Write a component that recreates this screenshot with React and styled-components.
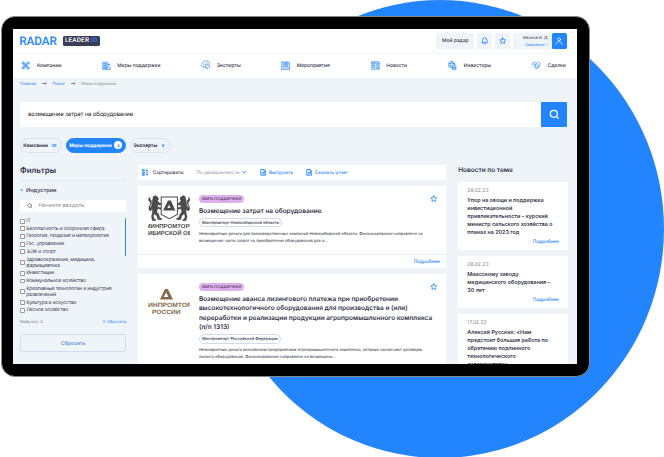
import React from "react";
import styled, { createGlobalStyle, css } from "styled-components";

const blue = "#2385fe";
const ink = "#34354a";
const pale = "#eff4f9";

const Global = createGlobalStyle`
  * { box-sizing: border-box; }
  html, body { margin: 0; padding: 0; background: #fff; overflow: hidden; }
  body { font-family: Inter, "Liberation Sans", sans-serif; font-size: 5px; color: ${ink}; text-rendering: geometricPrecision; }
  svg { display: block; flex: none; }
`;

const Page = styled.div`
  position: relative;
  width: 664px;
  height: 457px;
  padding: 16px 0 0 1px;
  overflow: hidden;
`;
const Disc = styled.div`
  position: absolute;
  left: 216px;
  top: -0.5px;
  width: 448px;
  height: 458px;
  border-radius: 50%;
  background: ${blue};
`;
const Device = styled.div`
  position: relative;
  width: 588.5px;
  height: 361px;
  padding: 11.7px 11px 12px 10.7px;
  background: #000;
  border: 1px solid #85878a;
  border-radius: 14px;
`;
const Screen = styled.div`
  width: 564.3px;
  height: 335.3px;
  overflow: hidden;
  background: ${pale};
`;
const Text = styled.span`
  display: block;
  margin: ${(p) => p.$drop ?? 0.5}px 0 ${(p) => -(p.$drop ?? 0.5)}px;
  white-space: nowrap;
  font-size: ${(p) => p.$size || 5}px;
  font-weight: ${(p) => p.$weight || 400};
  color: ${(p) => p.$color || "inherit"};
  letter-spacing: ${(p) => p.$track || 0}px;
`;

const Header = styled.header`
  display: flex;
  align-items: center;
  height: 24.3px;
  padding: 0 10px 0 6.5px;
  background: #fff;
`;
const Brand = styled.div`
  width: 43.5px;
  font: 500 11.8px/14px Roboto, sans-serif;
  letter-spacing: -0.1px;
  color: ${blue};
`;
const BrandTag = styled.div`
  display: flex;
  align-items: center;
  justify-content: center;
  gap: 2px;
  width: 37px;
  height: 9.5px;
  border-radius: 1.6px;
  background: #3b3c55;
  color: #fff;
  font: 500 6.5px/9px Roboto, sans-serif;
  letter-spacing: 0.1px;
  b { color: ${blue}; font-weight: 500; }
`;
const HeaderTools = styled.div`
  display: flex;
  gap: 3px;
  margin-left: auto;
`;
const Tool = styled.div`
  display: flex;
  align-items: center;
  justify-content: center;
  width: ${(p) => p.$w}px;
  height: 15.5px;
  border-radius: 1.5px;
  background: ${pale};
`;
const User = styled.div`
  display: flex;
  height: 15.5px;
  border-radius: 1.5px;
  overflow: hidden;
  background: ${pale};
`;
const UserName = styled.div`
  display: flex;
  flex-direction: column;
  align-items: flex-end;
  justify-content: center;
  gap: 1px;
  width: 38.5px;
  padding-right: 3.3px;
  line-height: 6px;
`;
const UserRole = styled.div`
  display: flex;
  align-items: center;
  gap: 1.5px;
`;
const Avatar = styled.div`
  display: grid;
  place-items: center;
  width: 15.2px;
  background: ${blue};
  border-radius: 1.5px;
`;

const Nav = styled.nav`
  display: grid;
  grid-template-columns: 80.2px 99px 80.3px 90px 77.5px 83.7px 1fr;
  align-items: center;
  height: 25px;
  padding: 0 0 1.4px 8.8px;
  background: #fff;
  border-top: 0.5px solid #f6f9fc;
`;
const NavItem = styled.div`
  display: flex;
  align-items: center;
  gap: 6.4px;
  line-height: 8px;
`;

const Crumbs = styled.div`
  display: flex;
  align-items: center;
  height: 10.7px;
  margin-left: 7.3px;
  gap: 6px;
`;
const Search = styled.div`
  display: flex;
  justify-content: space-between;
  align-items: center;
  width: 547px;
  height: 24.7px;
  margin: 13.3px 0 0 7.3px;
  padding-left: 8px;
  background: #fff;
`;
const SearchButton = styled.div`
  display: grid;
  place-items: center;
  width: 26px;
  height: 24.7px;
  border-radius: 0 1px 1px 0;
  background: ${blue};
`;
const Tabs = styled.div`
  display: flex;
  gap: 4px;
  margin: 11.6px 0 0 7.3px;
`;
const Tab = styled.div`
  display: flex;
  align-items: center;
  justify-content: space-between;
  width: ${(p) => p.$w}px;
  height: 14.3px;
  padding: 0 ${(p) => (p.$active ? "2.6px" : "3.2px")} 0 2.2px;
  border-radius: 8px;
  border: 0.7px solid #d7e5f5;
  ${(p) => p.$active && css`
    background: ${blue};
    border-color: ${blue};
    color: #fff;
  `}
`;
const Count = styled.span`
  display: grid;
  place-items: center;
  min-width: 8px;
  height: 8px;
  border-radius: 4px;
  font-size: 4.1px;
  font-weight: 600;
  color: ${blue};
  background: ${(p) => (p.$active ? "#fff" : "transparent")};
`;

const Body = styled.div`
  display: grid;
  grid-template-columns: 106.3px 308.3px 109.7px;
  column-gap: 11.8px;
  margin-left: 7.3px;
  height: 211px;
`;

const Filters = styled.aside`
  padding-top: 11.5px;
`;
const FilterTitle = styled.div`
  height: 16.8px;
  line-height: 12px;
  border-bottom: 0.7px solid #dfe8f2;
`;
const Group = styled.div`
  display: flex;
  align-items: center;
  gap: 2px;
  height: 19px;
`;
const FilterInput = styled.div`
  display: flex;
  align-items: center;
  gap: 5.4px;
  height: 12.3px;
  padding-left: 7.5px;
  background: #fff;
`;
const Options = styled.div`
  display: grid;
  grid-template-columns: 1fr 1.2px;
  margin-top: 5.2px;
`;
const Scroll = styled.div`
  height: 38px;
  margin-top: 0.5px;
  background: ${blue};
  border-radius: 1px;
`;
const Option = styled.div`
  display: flex;
  align-items: center;
  gap: 1.3px;
  height: ${(p) => (p.$tall ? 14 : 7.65)}px;
  font-size: 4.9px;
  line-height: 6px;
  letter-spacing: -0.1px;
  white-space: pre;
`;
const Box = styled.i`
  flex: none;
  width: 4.9px;
  height: 4.9px;
  background: #fff;
  border: 0.7px solid #999ca3;
  border-radius: 0.8px;
`;
const FilterFoot = styled.div`
  display: flex;
  align-items: center;
  justify-content: space-between;
  height: 8px;
  margin-top: 3.4px;
`;
const Reset = styled.div`
  display: grid;
  place-items: center;
  height: 18.2px;
  margin-top: 8.6px;
  border: 1px solid #cfdff3;
  border-radius: 1.5px;
`;

const Main = styled.main`
  padding-top: 12px;
`;
const SortBar = styled.div`
  display: flex;
  align-items: center;
  height: 15.2px;
  padding-left: 4px;
  background: #fff;
`;
const SortLabel = styled.div`
  width: 43.7px;
  margin-left: 3.7px;
`;
const SortValue = styled.div`
  display: flex;
  align-items: center;
  justify-content: space-between;
  width: 50px;
`;
const Action = styled.div`
  display: flex;
  align-items: center;
  gap: 2.4px;
  margin-left: ${(p) => p.$gap}px;
`;
const Card = styled.article`
  display: grid;
  grid-template-columns: 42.5px minmax(0, 1fr);
  column-gap: 8.5px;
  height: ${(p) => p.$h}px;
  margin-top: 6.4px;
  padding: 8.8px 7px 0 9.8px;
  background: #fff;
`;
const CardBody = styled.div`
  display: flex;
  flex-direction: column;
  align-items: flex-start;
`;
const CardTop = styled.div`
  display: flex;
  justify-content: space-between;
  width: 100%;
  padding-right: 2.2px;
`;
const Badge = styled.span`
  display: grid;
  place-items: center;
  width: 45.6px;
  height: 8px;
  border-radius: 4px;
  background: #dfb1ec;
`;
const CardTitle = styled.h3`
  margin: 4.1px 0 1.5px;
  font-size: 6.5px;
  line-height: 9.4px;
  font-weight: 600;
  white-space: pre;
`;
const Chip = styled.div`
  display: grid;
  place-items: center;
  width: ${(p) => p.$w}px;
  height: 9.4px;
  border: 0.7px solid #cddcec;
  border-radius: 5px;
`;
const Desc = styled.div`
  display: flex;
  flex-direction: column;
  margin-top: 3.2px;
  line-height: 6.5px;
`;
const CardFoot = styled.div`
  display: flex;
  grid-column: 1 / -1;
  align-items: center;
  justify-content: flex-end;
  align-self: end;
  height: 14px;
  margin: 0 -7px 0 -9.8px;
  padding-right: 6.5px;
  border-top: 0.7px solid #edf2f7;
`;

const News = styled.aside`
  padding-top: 11.6px;
`;
const NewsTitle = styled.div`
  height: 17.4px;
  line-height: 10px;
`;
const NewsCard = styled.article`
  display: flex;
  flex-direction: column;
  height: ${(p) => p.$h}px;
  margin-bottom: 6.4px;
  padding: 4.4px 9px 0 9.2px;
  background: #fff;
  line-height: 8px;
`;
const NewsDate = styled.div`
  display: flex;
  height: 9.8px;
`;
const NewsLink = styled.div`
  display: flex;
  justify-content: flex-end;
  margin-top: 1px;
`;

const Icon = ({ s = 8, h, vb = "0 0 24 24", sw = 2, color = blue, children }) => (
  <svg width={s} height={h || s} viewBox={vb} fill="none" stroke={color} strokeWidth={sw} strokeLinecap="round" strokeLinejoin="round">
    {children}
  </svg>
);
const Star = () => (
  <Icon s={7.5} sw={2.6}><path d="M12 2.5l2.9 6 6.6.9-4.8 4.6 1.2 6.6-5.9-3.1-5.9 3.1 1.2-6.6-4.8-4.6 6.6-.9z" /></Icon>
);
const Chevron = ({ s = 4.5, sw = 5 }) => (
  <Icon s={s} sw={sw}><path d="M3 8l9 8 9-8" /></Icon>
);
const Arrow = () => (
  <Icon s={4.6} h={3} vb="0 0 46 30" sw={6} color="#4a4b5c"><path d="M3 15h38M31 6l10 9-10 9" /></Icon>
);
const Doc = () => (
  <Icon s={6.8} sw={3}>
    <path d="M4 2h11l5 5v15H4zM14 2v6h6" /><path d="M8 13h8M8 17h8" />
  </Icon>
);
const Lens = ({ s, color, sw }) => (
  <Icon s={s} color={color} sw={sw}><circle cx="11" cy="11" r="8" /><path d="M17 17l4.5 4.5" /></Icon>
);

const navArt = {
  company: (
    <><circle cx="5" cy="5" r="3" /><circle cx="19" cy="5" r="3" /><circle cx="5" cy="19" r="3" /><circle cx="19" cy="19" r="3" />
      <path d="M7 7l10 10M17 7L7 17M8 5c3 3 5 3 8 0M8 19c3-3 5-3 8 0M5 8c3 3 3 5 0 8M19 8c-3 3-3 5 0 8" /><circle cx="12" cy="12" r="3" /></>
  ),
  support: (
    <><path d="M2 22V3h11v19zM5 7h5M5 11h5M5 15h5M5 19h5M13 9h6v5" fill="#b9d9ff" /><path d="M12 16h4l2 2h5v4H12zM16 5l3 4" /></>
  ),
  expert: (
    <><path d="M6 17c-4 0-6-3-5-6 0-2 2-3 3-3 0-4 4-6 7-5 4-2 8 0 9 4 3 1 4 4 2 7" /><path d="M6 17h5M7 11c2-2 4-1 5 1M15 7c-1 2 0 4 2 4M12 14l4-3 6 4-3 4-3 3-4-4zM12 18l3 3" /></>
  ),
  event: (
    <><path d="M2 3h20v19H2zM2 18h20" /><path d="M6 3h12v11H6z" fill="#b9d9ff" /><path d="M9 7h6M9 10h6" /></>
  ),
  news: (
    <><path d="M2 2h20v20H2zM2 6h20" fill="#d7e9ff" /><path d="M5 10h4v4H5zM5 17h4v2M14 10h5M14 13l5 6M19 13v3M15 19h4M5 4h1M9 4h1" /></>
  ),
  investor: (
    <><circle cx="10" cy="10" r="8.5" /><path d="M2 7h16M2 13h10M10 1.5c-5 5-5 12 0 17M10 1.5c4 4 4 7 3 9" /><path d="M12 22v-7l4-4 5 4v7zM12 17h10M16 22v-3" fill="#b9d9ff" /></>
  ),
  deal: (
    <><path d="M12 21L3 12C0 8 3 3 7 3c3 0 5 3 5 3s2-3 5-3c5 0 7 5 4 9z" /><path d="M12 6L8 11l3 1 3-3 6 5M8 16l3-3M11 19l3-3M4 7l4 4M14 17l3-3" /></>
  ),
};
const navItems = [
  ["company", "Компании", 9], ["support", "Меры поддержки", 9.3], ["expert", "Эксперты", 9.7],
  ["event", "Мероприятия", 9.3], ["news", "Новости", 9], ["investor", "Инвесторы", 9], ["deal", "Сделки", 9],
];

const options = [
  ["IT"], ["Безопасность и оборонная сфера"], ["Геология, геодезия и метеорология"], ["Гос. управление"], ["ЗОЖ и спорт"],
  ["Здравоохранение, медицина,\nфармацевтика", true], ["Инвестиции"], ["Коммунальное хозяйство"],
  ["Креативные технологии и индустрия\nразвлечений", true], ["Культура и искусство"], ["Лесное хозяйство"],
];

const news = [
  { h: 67.6, date: "28.02.23", lines: ["Упор на овощи и поддержка", "инвестиционной", "привлекательности – курский", "министр сельского хозяйства о", "планах на 2023 год"] },
  { h: 51.3, date: "28.02.23", lines: ["Миасскому заводу", "медицинского оборудования –", "30 лет"] },
  { h: 70, date: "17.02.23", lines: ["Алексей Русских: «Нам", "предстоит большая работа по", "обретению подлинного", "технологического", "суверенитета»"] },
];

const Lion = ({ flip }) => (
  <g transform={flip ? "translate(42.5 0) scale(-1 1)" : undefined}>
    <path d="M5.2 1.4l2-.9 2.7 1.3.8 2.2-1.3 1 2.4 2.4 2-.2.1 1.4-2.7.6-1.4-.8.1 2.5 2.5.1 1.1 1.5-1.1.5-1.3-.8-1.7.4-.6 2.6 1.9 2 1.2 3.1 1.8.5.2 1.2H9.8l-1-3.2-2.5-2-.9 2.3 1.2 2.5 1.3.5v.8H4.4l-1-3.8 1-3.4-.2-3.4-1.7 2.1-1.7-1.5.2-2.4L2.3 8 1.7 5.6.4 4.8l.3-1.9 1.4-1-.1 1.9 1.4 1 .1 2.8-1.6 2.7.4 1 1.5-2.4.4-3.2z" fill="#4b4b4d" stroke="#4b4b4d" strokeWidth="0.3" />
  </g>
);
const LogoNsk = () => (
  <svg width="42.5" height="41.5" viewBox="0 0 42.5 41.5">
    <g transform="scale(1 1.12)">
      <Lion /><Lion flip />
      <path d="M13.2 1.8h16.2v15.6l-8.1 3.8-8.1-3.8z" fill="#fff" stroke="#4b4b4d" strokeWidth="1" />
      <path d="M20 4.8h2.9l4.5 9H16.8l1.4-2.3h4.4l-1.5-2.9-3.1 5.2h-3z" fill="#4b4b4d" />
    </g>
    <g fill="#4b4b4d" fontFamily="Liberation Sans, sans-serif" fontWeight="700" fontSize="5.9">
      <text x="-2.5" y="33.3" textLength="47.5" lengthAdjust="spacingAndGlyphs">МИНПРОМТОРГ</text>
      <text x="0" y="40.2" textLength="44" lengthAdjust="spacingAndGlyphs">ИБИРСКОЙ ОБ</text>
    </g>
  </svg>
);
const LogoRus = () => (
  <svg width="42.5" height="36" viewBox="0 0 42.5 36">
    <path d="M17 6h2.8l5.2 10.6H12l1.8-2.7h6.6l-2.1-4.3-4.2 7H12z" fill="#86694a" />
    <g fill="#86694a" fontFamily="Liberation Sans, sans-serif" fontWeight="700" fontSize="6.1">
      <text x="0" y="24.2" textLength="43.5" lengthAdjust="spacingAndGlyphs">ИНПРОМТОР</text>
      <text x="4" y="30.8" textLength="28.6" lengthAdjust="spacingAndGlyphs">РОССИИ</text>
    </g>
  </svg>
);

const More = () => <Text $size={4.7} $weight={500} $color={blue}>Подробнее</Text>;

const Measure = ({ h, logo, title, chip, chipW, desc, foot }) => (
  <Card $h={h}>
    {logo}
    <CardBody>
      <CardTop>
        <Badge><Text $drop={0} $size={3.9} $weight={600} $color="#5c4068">МЕРА ПОДДЕРЖКИ</Text></Badge>
        <Star />
      </CardTop>
      <CardTitle>{title}</CardTitle>
      <Chip $w={chipW}><Text $drop={0} $size={4} $weight={500}>{chip}</Text></Chip>
      <Desc>{desc.map((t) => <Text key={t} $size={3.97}>{t}</Text>)}</Desc>
    </CardBody>
    {foot && <CardFoot><More /></CardFoot>}
  </Card>
);

export default function App() {
  return (
    <Page>
      <Global />
      <Disc />
      <Device>
        <Screen>
          <Header>
            <Brand>RADAR</Brand>
            <BrandTag>LEADER <b>ID</b></BrandTag>
            <HeaderTools>
              <Tool $w={38}><Text $size={4.9} $weight={500}>Мой радар</Text></Tool>
              <Tool $w={15}>
                <Icon s={7.5} sw={2.7}><path d="M5 17V10a7 7 0 0114 0v7l1.5 1h-17zM10 21.5h4" /></Icon>
              </Tool>
              <Tool $w={15}><Star /></Tool>
              <User>
                <UserName>
                  <Text $size={4}>Иванов И. Д.</Text>
                  <UserRole><Text $size={3.9} $color={blue}>Компания</Text><Chevron s={2.7} sw={3} /></UserRole>
                </UserName>
                <Avatar>
                  <Icon s={8} sw={2} color="#fff"><circle cx="12" cy="7" r="4.5" /><path d="M3 22c0-5 4-8 9-8s9 3 9 8" /></Icon>
                </Avatar>
              </User>
            </HeaderTools>
          </Header>
          <Nav>
            {navItems.map(([k, label, s]) => (
              <NavItem key={k}>
                <Icon s={s} sw={1.6}>{navArt[k]}</Icon>
                <Text $size={4.95} $weight={500} $track={-0.03}>{label}</Text>
              </NavItem>
            ))}
          </Nav>
          <Crumbs>
            <Text $drop={0} $size={4} $color={blue}>Главная</Text>
            <Arrow />
            <Text $drop={0} $size={4} $color={blue}>Поиск</Text>
            <Arrow />
            <Text $drop={0} $size={4} $color="#888c99">Меры поддержки</Text>
          </Crumbs>
          <Search>
            <Text $drop={0} $size={6} $track={-0.16} $color="#222">возмещение затрат на оборудование</Text>
            <SearchButton><Lens s={10.5} color="#fff" sw={2.8} /></SearchButton>
          </Search>
          <Tabs>
            <Tab $w={42}><Text $size={4.8} $weight={700}>Компании</Text><Count>39</Count></Tab>
            <Tab $w={60} $active><Text $size={4.7} $weight={700}>Меры поддержки</Text><Count $active>4</Count></Tab>
            <Tab $w={41.3}><Text $size={4.8} $weight={700}>Эксперты</Text><Count>6</Count></Tab>
          </Tabs>
          <Body>
            <Filters>
              <FilterTitle><Text $drop={0} $size={8} $weight={600}>Фильтры</Text></FilterTitle>
              <Group>
                <svg width="4" height="3" viewBox="0 0 4 3"><path d="M.4.5h2.8L1.8 2.3z" fill={blue} /></svg>
                <Text $size={5.6} $weight={500}>Индустрии</Text>
              </Group>
              <FilterInput>
                <Lens s={5.5} color="#555966" sw={2.8} />
                <Text $size={5.5} $color="#8b8f9b">Начните вводить</Text>
              </FilterInput>
              <Options>
                <div>
                  {options.map(([t, tall]) => (
                    <Option key={t} $tall={tall}><Box /><span>{t}</span></Option>
                  ))}
                </div>
                <Scroll />
              </Options>
              <FilterFoot>
                <Text $size={4.1} $color="#858997">Выбрано: 0</Text>
                <Text $size={4.1} $color={blue}>✕ Сбросить</Text>
              </FilterFoot>
              <Reset><Text $size={5.1} $weight={500} $color="#4c87d8">Сбросить</Text></Reset>
            </Filters>
            <Main>
              <SortBar>
                <Icon s={7} sw={2.8}><path d="M3 2h5v5H3zM3 10h5v5H3zM3 18h5v4H3zM17 3v18M13 7l4-4 4 4M13 17l4 4 4-4" /></Icon>
                <SortLabel><Text $size={4.65} $weight={500}>Сортировать:</Text></SortLabel>
                <SortValue><Text $size={4.75} $color="#888c99">По релевантности</Text><Chevron /></SortValue>
                <Action $gap={13.3}><Doc /><Text $size={4.7} $weight={500} $color={blue}>Выгрузить</Text></Action>
                <Action $gap={12.4}><Doc /><Text $size={4.7} $weight={500} $color={blue}>Скачать отчет</Text></Action>
              </SortBar>
              <Measure
                h={81.6}
                logo={<LogoNsk />}
                title="Возмещение затрат на оборудование"
                chip="Минпромторг Новосибирской области"
                chipW={83.3}
                desc={[
                  "Невозвратные деньги для производственных компаний Новосибирской области. Финансирование направлено на",
                  "возмещение части затрат на приобретение оборудования для о...",
                ]}
                foot
              />
              <Measure
                h={100}
                logo={<LogoRus />}
                title={"Возмещение аванса лизингового платежа при приобретении\nвысокотехнологичного оборудования для производства и (или)\nпереработки и реализации продукции агропромышленного комплекса\n(п/п 1313)"}
                chip="Минпромторг Российской Федерации"
                chipW={82}
                desc={[
                  "Невозвратные деньги российским предприятиям агропромышленного комплекса, которые заключают договоры",
                  "лизинга оборудования. Финансирование направлено на возмещени...",
                ]}
              />
            </Main>
            <News>
              <NewsTitle><Text $drop={0.8} $size={6.5} $weight={600}>Новости по теме</Text></NewsTitle>
              {news.map((n, i) => (
                <NewsCard key={i} $h={n.h}>
                  <NewsDate><Text $size={5} $color="#858997">{n.date}</Text></NewsDate>
                  {n.lines.map((l) => <Text key={l} $size={5.35} $weight={600}>{l}</Text>)}
                  <NewsLink><More /></NewsLink>
                </NewsCard>
              ))}
            </News>
          </Body>
        </Screen>
      </Device>
    </Page>
  );
}
